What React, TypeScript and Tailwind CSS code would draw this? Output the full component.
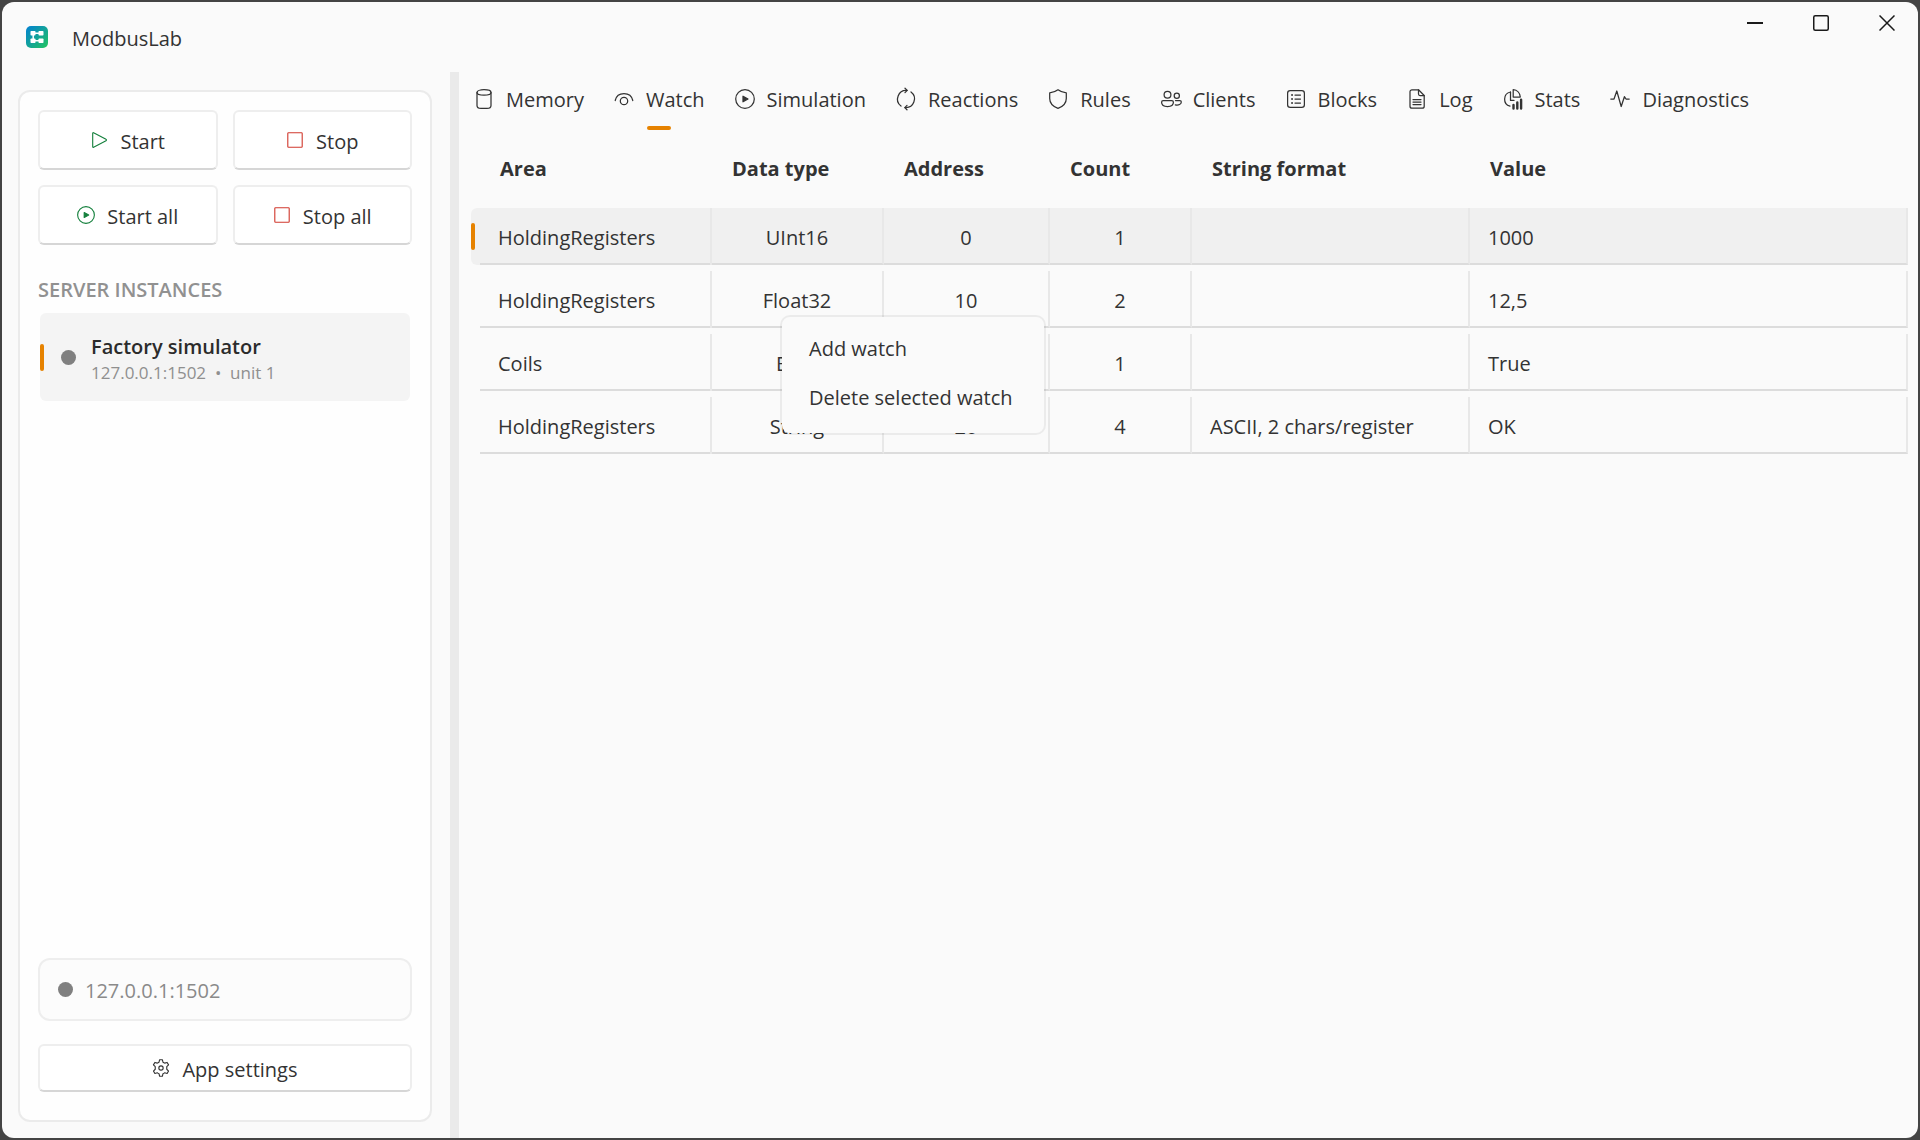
import React, { useState } from "react";

type IconProps = { className?: string };

const Svg: React.FC<IconProps & { children: React.ReactNode }> = ({
  className = "w-5 h-5",
  children,
}) => (
  <svg
    viewBox="0 0 20 20"
    className={className}
    fill="none"
    stroke="currentColor"
    strokeWidth={1.25}
    strokeLinecap="round"
    strokeLinejoin="round"
    overflow="visible"
    aria-hidden="true"
  >
    {children}
  </svg>
);

const Label: React.FC<{ children: React.ReactNode }> = ({ children }) => (
  <span className="block pt-[3px]">{children}</span>
);

const icons: Record<string, React.ReactNode> = {
  memory: (
    <>
      <ellipse cx="10" cy="3.4" rx="7" ry="2.7" />
      <path d="M3 3.400v13c0 1.600 1.500 2.900 4 2.900h6c2.500 0 4-1.300 4-2.900v-13" />
    </>
  ),
  watch: (
    <>
      <path d="M1.200 11.500C2.200 7 5.600 4.600 10 4.600s7.800 2.400 8.800 6.900" />
      <circle cx="10" cy="12" r="3.700" />
    </>
  ),
  simulation: (
    <>
      <circle cx="10" cy="10" r="9.300" />
      <path d="M8 7.200v5.600l5-2.800z" fill="currentColor" />
    </>
  ),
  reactions: (
    <>
      <path d="M11 1.400A8.700 8.700 0 0 0 5 17" />
      <path d="M9-.8l2.200 2.200-2.200 2.200" />
      <path d="M9 18.600A8.700 8.700 0 0 0 15 3" />
      <path d="M11 20.800l-2.200-2.200 2.200-2.200" />
    </>
  ),
  rules: (
    <path d="M10 .8c2.600 2 5.200 2.800 8.300 3v5.700c0 4.600-3 7.900-8.300 9.900-5.300-2-8.300-5.300-8.300-9.900V3.800c3.100-.2 5.700-1 8.300-3z" />
  ),
  clients: (
    <>
      <circle cx="6.500" cy="5.800" r="3.400" />
      <circle cx="15.800" cy="6.800" r="2.600" />
      <path d="M2.200 11.600h8.600c1 0 1.600.7 1.600 1.600 0 2.600-2.500 4.300-5.900 4.300S.6 15.800.6 13.200c0-.9.6-1.600 1.600-1.600z" />
      <path d="M14.500 11.600h4.400c.9 0 1.400.6 1.400 1.400 0 2.300-2.600 3.500-6 2.900" />
    </>
  ),
  blocks: (
    <>
      <rect x="1.600" y="1.600" width="16.800" height="16.800" rx="2.600" />
      <path d="M9 6h5.500M9 10h5.500M9 14h5.500" />
      <path d="M6 6h.1M6 10h.1M6 14h.1" strokeWidth={1.800} />
    </>
  ),
  log: (
    <>
      <path d="M5 .8h6.500l5.700 5.700v10.700a2 2 0 0 1-2 2H5a2 2 0 0 1-2-2V2.800a2 2 0 0 1 2-2z" />
      <path d="M11.500.8v4.200a1.500 1.500 0 0 0 1.500 1.500h4.200M6 10.500h8M6 13h8M6 15.500h8" />
    </>
  ),
  stats: (
    <>
      <path d="M7.500 3a7.300 7.300 0 0 0-.5 14.200" />
      <path d="M7.500 3v8.400h3.500" />
      <path d="M10.200.6c3.900.3 6.800 3.400 7.100 7.400h-7.100z" />
      <path d="M10.500 16v3.600M14.300 13.500v6.100M18.100 10.800v8.800" strokeWidth={2.400} />
    </>
  ),
  diagnostics: (
    <path d="M.8 10h3.200L6.800 2l4.400 15.500 3.200-9.800 1.600 2.300h3.200" />
  ),
  play: <path d="M3 2.600v14.800c0 .6.500.9 1 .6l13.800-7.300c.6-.3.600-1.100 0-1.400L4 2c-.5-.3-1 0-1 .6z" />,
  stop: <rect x="2" y="2" width="16" height="16" rx=".8" />,
  settings: (
    <>
      <circle cx="10" cy="10" r="2.400" />
      <path d="M8.500.8h3l.7 2.700c.8.4 1.200.6 1.900 1.100l2.700-.8 1.600 2.700-2 2v2.900l2 2-1.600 2.700-2.700-.8c-.7.5-1.100.8-1.900 1.100l-.7 2.800h-3l-.7-2.800c-.8-.3-1.200-.6-1.900-1.100l-2.700.8-1.600-2.700 2-2V8.500l-2-2 1.600-2.700 2.700.8c.7-.5 1.100-.7 1.900-1.100z" />
    </>
  ),
};

const Logo: React.FC = () => (
  <svg viewBox="0 0 22 22" className="w-[22px] h-[22px]" aria-hidden="true">
    <defs>
      <linearGradient id="logo" x1="0" y1="0" x2="1" y2="1">
        <stop offset="0" stopColor="#0280d4" />
        <stop offset="1" stopColor="#22c55e" />
      </linearGradient>
    </defs>
    <rect width="22" height="22" rx="5" fill="url(#logo)" />
    <g fill="#fff">
      <rect x="4.500" y="5" width="5" height="4.500" rx=".8" />
      <rect x="12.500" y="5" width="5" height="4.500" rx=".8" />
      <rect x="4.500" y="12.500" width="5" height="4.500" rx=".8" />
      <rect x="12.500" y="12.500" width="5" height="4.500" rx=".8" />
    </g>
    <path d="M9 7.300h4M9 14.700h4M7.200 9v4" stroke="#fff" strokeWidth="1.500" />
  </svg>
);

const tabs = [
  { id: "memory", label: "Memory" },
  { id: "watch", label: "Watch" },
  { id: "simulation", label: "Simulation" },
  { id: "reactions", label: "Reactions" },
  { id: "rules", label: "Rules" },
  { id: "clients", label: "Clients" },
  { id: "blocks", label: "Blocks" },
  { id: "log", label: "Log" },
  { id: "stats", label: "Stats" },
  { id: "diagnostics", label: "Diagnostics" },
];

const columns = [
  { label: "Area", width: "w-[241px]" },
  { label: "Data type", width: "w-[172px]" },
  { label: "Address", width: "w-[166px]" },
  { label: "Count", width: "w-[142px]" },
  { label: "String format", width: "w-[278px]" },
  { label: "Value", width: "" },
];

const watches = [
  { area: "HoldingRegisters", type: "UInt16", address: "0", count: "1", format: "", value: "1000" },
  { area: "HoldingRegisters", type: "Float32", address: "10", count: "2", format: "", value: "12,5" },
  { area: "Coils", type: "Bool", address: "0", count: "1", format: "", value: "True" },
  { area: "HoldingRegisters", type: "String", address: "20", count: "4", format: "ASCII, 2 chars/register", value: "OK" },
];

const commands = [
  { label: "Start", icon: "play", color: "text-[#15803d]" },
  { label: "Stop", icon: "stop", color: "text-[#d13a2f]" },
  { label: "Start all", icon: "simulation", color: "text-[#15803d]" },
  { label: "Stop all", icon: "stop", color: "text-[#d13a2f]" },
];

const App: React.FC = () => {
  const [activeTab, setActiveTab] = useState("watch");
  const [selected, setSelected] = useState(0);

  return (
    <div className="min-h-screen flex bg-[#444444] p-0.5 font-['Open_Sans','Noto_Sans',sans-serif] text-xl text-[#333333]">
      <div className="flex-1 flex flex-col bg-[#fafafa] rounded-xl overflow-hidden">
        {/* Title bar */}
        <header className="h-[70px] flex items-start justify-between pl-6">
          <div className="h-[70px] flex items-center gap-6">
            <Logo />
            <h1>
              <Label>ModbusLab</Label>
            </h1>
          </div>
          <div className="flex -mr-0.5 text-[#1a1a1a]">
            <button aria-label="Minimize" className="w-[66px] h-[42px] flex items-center justify-center">
              <svg viewBox="0 0 16 16" className="w-4 h-4" fill="none" stroke="currentColor" strokeWidth={2}>
                <path d="M0 8h16" />
              </svg>
            </button>
            <button aria-label="Maximize" className="w-[66px] h-[42px] flex items-center justify-center">
              <svg viewBox="0 0 16 16" className="w-4 h-4" fill="none" stroke="currentColor" strokeWidth={1.5}>
                <rect x=".75" y=".75" width="14.5" height="14.5" rx="1.500" />
              </svg>
            </button>
            <button aria-label="Close" className="w-[66px] h-[42px] flex items-center justify-center">
              <svg viewBox="0 0 16 16" className="w-4 h-4" fill="none" stroke="currentColor" strokeWidth={1.5}>
                <path d="M.5.5l15 15M15.500.5l-15 15" />
              </svg>
            </button>
          </div>
        </header>

        <div className="flex-1 flex">
          {/* Sidebar */}
          <aside className="w-[414px] shrink-0 ml-4 mr-[18px] mt-[18px] mb-4 px-[18px] pt-[18px] pb-7 flex flex-col bg-[#fefefe] border-2 border-[#ebebeb] rounded-xl">
            <div className="grid grid-cols-2 gap-[15px]">
              {commands.map((command) => (
                <button
                  key={command.label}
                  className="h-[60px] flex items-center justify-center gap-3 bg-white border-2 border-[#eeeeee] border-b-[#d6d6d6] rounded-md"
                >
                  <span className={command.color}>
                    <Svg className="w-[18px] h-[18px]">{icons[command.icon]}</Svg>
                  </span>
                  <Label>{command.label}</Label>
                </button>
              ))}
            </div>

            <h2 className="mt-7 mb-[10px] h-[30px] font-semibold text-[#919191]">
              <Label>SERVER INSTANCES</Label>
            </h2>
            <button className="relative mx-0.5 h-[88px] pl-[21px] flex items-center gap-[15px] bg-[#f4f4f4] rounded-md text-left before:absolute before:left-0 before:w-1 before:h-[27px] before:rounded-full before:bg-[#e68200]">
              <span className="w-[15px] h-[15px] rounded-full bg-[#808080]"></span>
              <span className="flex flex-col pt-[3px]">
                <span className="leading-7 font-semibold text-[#2b2b2b]">Factory simulator</span>
                <span className="text-[17px] leading-6 text-[#8f8f8f]">
                  127.0.0.1:1502&nbsp; •&nbsp; unit 1
                </span>
              </span>
            </button>

            <div className="mt-auto h-[63px] px-[18px] flex items-center gap-3 bg-[#fcfcfc] border-2 border-[#eeeeee] rounded-xl text-[#8a8a8a]">
              <span className="w-[15px] h-[15px] rounded-full bg-[#808080]"></span>
              <Label>127.0.0.1:1502</Label>
            </div>
            <button className="mt-[23px] h-12 flex items-center justify-center gap-3 bg-white border-2 border-[#eeeeee] border-b-[#d6d6d6] rounded-md">
              <Svg className="w-[18px] h-[18px]">{icons.settings}</Svg>
              <Label>App settings</Label>
            </button>
          </aside>

          <div className="w-[9px] shrink-0 bg-[#eaeaea]"></div>

          {/* Main Content */}
          <main className="relative flex-1 pr-[10px]">
            <nav className="flex" role="tablist">
              {tabs.map((tab) => (
                <button
                  key={tab.id}
                  role="tab"
                  aria-selected={activeTab === tab.id}
                  onClick={() => setActiveTab(tab.id)}
                  className={`h-[58px] px-[15px] pb-[5px] flex items-center gap-3 ${
                    activeTab === tab.id
                      ? "relative after:absolute after:bottom-0 after:left-1/2 after:-translate-x-1/2 after:w-6 after:h-1 after:rounded-full after:bg-[#e68200]"
                      : ""
                  }`}
                >
                  <Svg>{icons[tab.id]}</Svg>
                  <Label>{tab.label}</Label>
                </button>
              ))}
            </nav>

            <div className="pl-3">
              <table className="w-full table-fixed border-separate border-spacing-x-0 border-spacing-y-[6px]">
                <thead>
                  <tr>
                    {columns.map((column, index) => (
                      <th
                        key={column.label}
                        className={`h-[66px] text-left font-bold ${column.width} ${
                          index === 0 ? "pl-[29px]" : "pl-5"
                        }`}
                      >
                        {column.label}
                      </th>
                    ))}
                  </tr>
                </thead>
                <tbody>
                  {watches.map((watch, index) => (
                    <tr
                      key={index}
                      onClick={() => setSelected(index)}
                      className="group"
                      aria-selected={selected === index}
                    >
                      <td className="relative h-[57px] p-0 pt-[2px] pl-[27px] rounded-l-md border-r-2 border-[#e8e8e8] group-aria-selected:bg-[#f0f0f0] after:absolute after:bottom-0 after:left-[9px] after:right-0 after:h-0.5 after:bg-[#dcdcdc] group-aria-selected:before:absolute group-aria-selected:before:left-0 group-aria-selected:before:top-[15px] group-aria-selected:before:w-1 group-aria-selected:before:h-[27px] group-aria-selected:before:rounded-full group-aria-selected:before:bg-[#e68200]">
                        {watch.area}
                      </td>
                      {[watch.type, watch.address, watch.count].map((text, i) => (
                        <td
                          key={i}
                          className="p-0 pt-1 text-center border-r-2 border-b-2 border-r-[#e8e8e8] border-b-[#dcdcdc] group-aria-selected:bg-[#f0f0f0]"
                        >
                          {text}
                        </td>
                      ))}
                      {[watch.format, watch.value].map((text, i) => (
                        <td
                          key={i}
                          className="p-0 pt-1 pl-[18px] border-r-2 border-b-2 border-r-[#e8e8e8] border-b-[#dcdcdc] group-aria-selected:bg-[#f0f0f0]"
                        >
                          {text}
                        </td>
                      ))}
                    </tr>
                  ))}
                </tbody>
              </table>
            </div>

            {/* Context menu */}
            <div
              role="menu"
              className="absolute left-[321px] top-[243px] w-[266px] h-[120px] pt-[7px] flex flex-col bg-[#fafafa] bg-clip-padding border-2 border-black/6 rounded-[10px]"
            >
              <button role="menuitem" className="h-[49px] px-[27px] text-left whitespace-nowrap">
                Add watch
              </button>
              <button role="menuitem" className="h-[49px] px-[27px] text-left whitespace-nowrap">
                Delete selected watch
              </button>
            </div>
          </main>
        </div>
      </div>
    </div>
  );
};

export default App;
